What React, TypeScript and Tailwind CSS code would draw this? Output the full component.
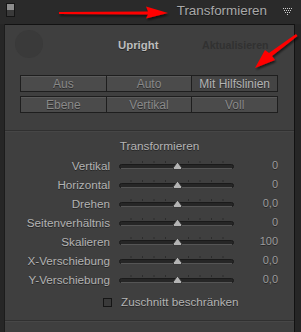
import React from "react";

const rows: [string, string][] = [
  ["Vertikal", "0"],
  ["Horizontal", "0"],
  ["Drehen", "0,0"],
  ["Seitenverhältnis", "0"],
  ["Skalieren", "100"],
  ["X-Verschiebung", "0,0"],
  ["Y-Verschiebung", "0,0"],
];

function Slider() {
  const ticks = [0, 1, 2, 3, 4, 5, 6, 7, 8, 9, 10];
  return (
    <div className="relative w-[115px] h-[12px]">
      <svg width="115" height="12" className="absolute left-0 top-0">
        {ticks.map((t) =>
          t === 0 || t === 10 || t === 5 ? null : (
            <line key={t} x1={t * 11.5 + 0.5} x2={t * 11.5 + 0.5} y1="2" y2="4" stroke="#2c2c2c" strokeWidth="1" />
          )
        )}
        <rect x="0.5" y="5.5" width="114" height="4" rx="2" fill="#262626" stroke="#1a1a1a" />
        <line x1="2" x2="113" y1="9.5" y2="9.5" stroke="#555" strokeWidth="1" />
        <path d="M58.5 3 L62.5 8.5 L62.5 10.5 L54.5 10.5 L54.5 8.5 Z" fill="#b4b4b4" stroke="#2a2a2a" strokeWidth="0.8" />
      </svg>
    </div>
  );
}

export default function App() {
  return (
    <div
      className="relative w-[301px] h-[332px] bg-[#2a2a2a] overflow-hidden"
      style={{ fontFamily: '"Liberation Sans", Arial, sans-serif' }}
    >
      {/* header */}
      <div className="h-[24px] flex items-center relative">
        <div className="ml-[6px] mt-[-4px] w-[9px] h-[14px] border border-[#151515] bg-[#3a3a3a] flex flex-col">
          <div className="h-[6px] bg-[#8c8c8c]" />
        </div>
        <div className="ml-auto mr-[34px] mt-[-2px] text-[13.4px] leading-none text-[#a9a9a9] [text-shadow:0_1px_0_#1a1a1a]">Transformieren</div>
        <svg width="12" height="8" className="absolute left-[282px] top-[8px]">
          {[0, 1, 2, 3, 4].map((i) => (
            <rect key={"a" + i} x={1 + i * 2} y="0" width="1" height="1" fill="#cfcfcf" />
          ))}
          {[0, 1, 2, 3].map((i) => (
            <rect key={"b" + i} x={2 + i * 2} y="2" width="1" height="1" fill="#cfcfcf" />
          ))}
          {[0, 1, 2].map((i) => (
            <rect key={"c" + i} x={3 + i * 2} y="4" width="1" height="1" fill="#cfcfcf" />
          ))}
          <rect x="5" y="6" width="1" height="1" fill="#cfcfcf" />
        </svg>
      </div>
      {/* body */}
      <div className="flex h-[308px]">
        <div className="w-[5px] border-r border-[#1c1c1c] bg-[#262626]" />
        <div className="w-[290px] bg-[#3f3f3f] border-t border-r border-[#121212] flex flex-col">
          {/* upright row */}
          <div className="h-[38px] flex items-start relative">
            <div className="ml-[10px] mt-[5px] w-[28px] h-[28px] rounded-full bg-[#3a3a3a]" />
            <div className="absolute left-[113px] top-[15px] text-[11.4px] font-bold text-[#bdbdbd] leading-none [text-shadow:0_1px_0_#262626]">Upright</div>
            <div className="absolute left-[197px] top-[15px] text-[10.6px] font-bold text-[#313131] leading-none">Aktualisieren</div>
          </div>
          {/* buttons */}
          <div className="ml-[15px] mt-[12px] w-[258px] flex flex-col gap-[4px] text-[12px] leading-none [text-shadow:0_1px_0_#2a2a2a]">
            <div className="flex h-[17px] border border-[#1e1e1e] bg-[#1e1e1e] gap-px">
              <div className="flex-1 bg-[#4b4b4b] text-[#8a8a8a] flex items-center justify-center border-t border-[#5a5a5a]">Aus</div>
              <div className="flex-1 bg-[#4b4b4b] text-[#8a8a8a] flex items-center justify-center border-t border-[#5a5a5a]">Auto</div>
              <div className="flex-1 bg-[#444444] text-[#b4b4b4] flex items-center justify-center">Mit Hilfslinien</div>
            </div>
            <div className="flex h-[17px] border border-[#1e1e1e] bg-[#1e1e1e] gap-px">
              <div className="flex-1 bg-[#4b4b4b] text-[#8a8a8a] flex items-center justify-center border-t border-[#5a5a5a]">Ebene</div>
              <div className="flex-1 bg-[#4b4b4b] text-[#8a8a8a] flex items-center justify-center border-t border-[#5a5a5a]">Vertikal</div>
              <div className="flex-1 bg-[#4b4b4b] text-[#8a8a8a] flex items-center justify-center border-t border-[#5a5a5a]">Voll</div>
            </div>
          </div>
          {/* separator */}
          <div className="mt-[17px] h-px bg-[#303030]" />
          <div className="h-px bg-[#464646]" />
          <div className="mt-[9px] h-[12px] flex items-center justify-center text-[11.8px] leading-none text-[#b5b5b5] pl-[20px] [text-shadow:0_1px_0_#262626]">
            Transformieren
          </div>
          <div className="mt-[3px] flex flex-col [text-shadow:0_1px_0_#262626]">
            {rows.map(([label, value]) => (
              <div key={label} className="h-[19px] flex items-center">
                <div className="w-[105px] text-right text-[11.7px] leading-none text-[#b3b3b3]">{label}</div>
                <div className="ml-[9px] mt-[-2px]">
                  <Slider />
                </div>
                <div className="w-[44px] text-right text-[11px] leading-none text-[#9c9c9c]">{value}</div>
              </div>
            ))}
          </div>
          <div className="mt-[3px] h-[20px] flex items-center">
            <div className="ml-[98px] w-[9px] h-[9px] border border-[#151515] bg-[#3a3a3a]" />
            <div className="ml-[9px] text-[11.7px] leading-none text-[#b3b3b3] [text-shadow:0_1px_0_#262626]">Zuschnitt beschränken</div>
          </div>
          <div className="mt-[8px] h-px bg-[#303030]" />
          <div className="h-px bg-[#474747]" />
        </div>
        <div className="w-[6px] bg-[#262626]" />
      </div>
      {/* annotation arrows */}
      <svg width="301" height="332" className="absolute left-0 top-0 pointer-events-none">
        <defs>
          <filter id="sh" x="-20%" y="-50%" width="140%" height="200%">
            <feDropShadow dx="1" dy="2" stdDeviation="1.2" floodColor="#000" floodOpacity="0.6" />
          </filter>
        </defs>
        <g filter="url(#sh)" fill="#ff0000">
          <path d="M59 12 L148 11.6 L146 6.5 L168 13 L146 18.5 L148 14.4 L59 14 Z" />
          <path d="M296 34 L297.5 36 L272 56 L275 60 L255 68 L265 50 L269 53 Z" />
        </g>
      </svg>
    </div>
  );
}
